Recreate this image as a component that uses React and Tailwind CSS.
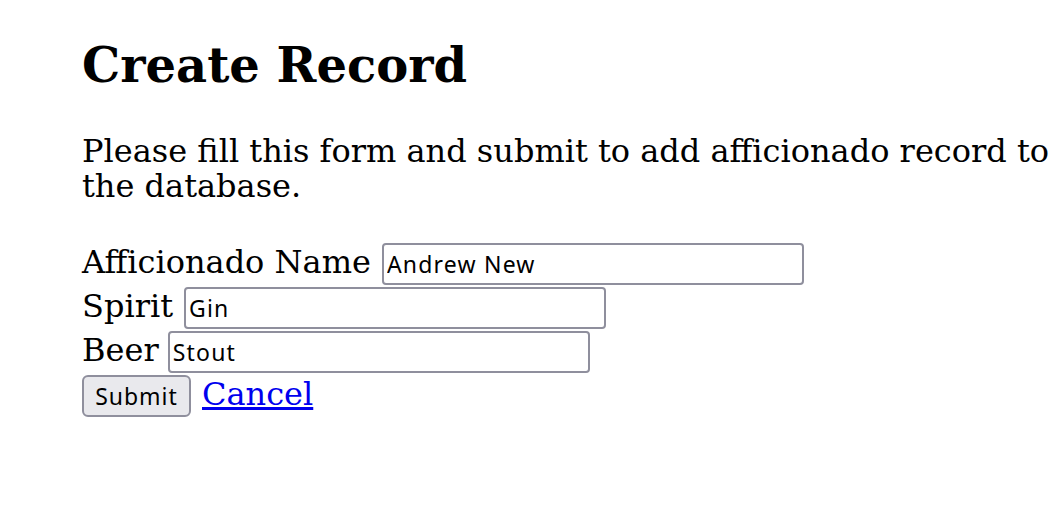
export default function App() {
  const inputCls =
    "w-[422px] h-[42px] border-2 border-[#8f8f9d] rounded-[4px] px-[3px] text-[23px] tracking-[1.2px] text-black bg-white outline-none";
  const sans = { fontFamily: '"Noto Sans", sans-serif' };
  return (
    <div className="w-[1060px] h-[524px] bg-white overflow-hidden pl-[82px] pr-[3px] pt-[37px] text-black" style={{ fontFamily: '"DejaVu Serif", serif' }}>
      <h1 className="text-[48px] font-bold leading-[56px]">Create Record</h1>
      <p className="mt-[41px] text-[32px] leading-[35px] w-[975px]">
        Please fill this form and submit to add afficionado record to the database.
      </p>
      <form className="mt-[39px] flex flex-col gap-[2px] text-[32px] leading-[35px]" onSubmit={(e) => e.preventDefault()}>
        <div className="flex items-baseline gap-[11px]">
          <label>Afficionado Name</label>
          <input className={inputCls} style={sans} defaultValue="Andrew New" />
        </div>
        <div className="flex items-baseline gap-[11px]">
          <label>Spirit</label>
          <input className={inputCls} style={sans} defaultValue="Gin" />
        </div>
        <div className="flex items-baseline gap-[9px]">
          <label>Beer</label>
          <input className={inputCls} style={sans} defaultValue="Stout" />
        </div>
        <div className="flex items-baseline gap-[11px]">
          <button type="submit" className="h-[42px] w-[109px] border-2 border-[#8f8f9d] rounded-[6px] bg-[#e9e9ed] text-[23px] tracking-[1px] text-black leading-none" style={sans}>Submit</button>
          <a href="#" className="text-[#0000ee] underline">Cancel</a>
        </div>
      </form>
    </div>
  );
}
